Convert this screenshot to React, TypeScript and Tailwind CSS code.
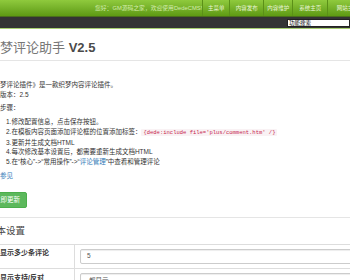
import React from "react";

const font = { fontFamily: '"Liberation Sans", "Noto Sans CJK SC", sans-serif' };

export default function App() {
  return (
    <div className="w-[350px] h-[280px] overflow-hidden bg-white relative" style={font}>
      {/* top green bar */}
      <div className="h-[16px] bg-gradient-to-b from-[#8fca3d] to-[#5e9a12] flex items-center whitespace-nowrap">
        <span className="ml-[95px] w-[117px] text-[5.8px] leading-[8px] text-[#d4ecad]">
          您好：GM源码之家，欢迎使用DedeCMS!
        </span>
        <div className="flex h-[16px] items-center">
          {[
            ["主菜单", "w-[27px]"],
            ["内容发布", "w-[34px]"],
            ["内容维护", "w-[29px]"],
            ["系统主页", "w-[35px]"],
            ["网站主页", "w-[40px]"],
          ].map(([t, w]) => (
            <div
              key={t}
              className={`${w} h-[16px] flex items-center justify-center border-l border-[#5b9018] text-[5.5px] leading-[8px] text-[#eaf6d8]`}
            >
              {t}
            </div>
          ))}
        </div>
      </div>
      {/* dark bar */}
      <div className="h-[12px] bg-[#343434] flex items-center border-t border-[#4a6e1c]">
        <div className="ml-[287px] w-[80px] h-[8px] bg-white border border-[#222] text-[5.5px] leading-[6px] px-[1px] text-black whitespace-nowrap">
          功能搜索
        </div>
      </div>
      <div className="h-[1px] bg-[#a9cf72]" />

      {/* content */}
      <div className="ml-[-13px] w-[380px] text-[#333]">
        <div className="pt-[11px] pb-[5px] border-b border-[#e5e5e5] mr-[-20px]">
          <h1 className="text-[13px] leading-[15px] text-[#777] whitespace-nowrap">
            织梦评论助手 <span className="font-semibold text-[#4a4a4a]">V2.5</span>
          </h1>
        </div>

        <div className="mt-[19px] text-[6.5px] leading-[10px] whitespace-nowrap">
          <p>《织梦评论插件》是一款织梦内容评论插件。</p>
          <p>当前版本：2.5</p>
          <p className="mt-[3px]">使用步骤：</p>
          <div className="mt-[4px] pl-[19px] leading-[9.75px]">
            <p>1.修改配置信息，点击保存按钮。</p>
            <p>
              2.在模板内容页面添加评论框的位置添加标签：
              <code
                className="px-[2px] rounded-[1px] bg-[#f9f2f4] text-[#c7254e] text-[5.5px]"
                style={{ fontFamily: '"Liberation Mono", monospace' }}
              >
                {"{dede:include file='plus/comment.htm' /}"}
              </code>
            </p>
            <p>3.更新并生成文档HTML</p>
            <p>4.每次修改基本设置后，都需要重新生成文档HTML</p>
            <p>
              5.在“核心”-&gt;“常用操作”-&gt;“<span className="text-[#337ab7]">评论管理</span>”中查看和管理评论
            </p>
          </div>
          <p className="mt-[4px] text-[#337ab7]">详情参见</p>
        </div>

        <div className="mt-[4px]">
          <div className="inline-flex items-center h-[16px] px-[6px] rounded-[2px] bg-[#5cb85c] border border-[#4cae4c] text-white text-[6.5px] leading-[8px] whitespace-nowrap">
            立即更新
          </div>
        </div>

        <div className="mt-[8px] h-[1px] bg-[#e5e5e5]" />

        <h2 className="mt-[7px] text-[9.5px] leading-[12px] text-[#444] whitespace-nowrap">基本设置</h2>

        <div className="mt-[7px] border-t border-[#ddd]">
          <div className="flex border-b border-[#ddd] h-[24px]">
            <div className="w-[88px] shrink-0 border-r border-[#ddd] pl-[13px] pt-[4px] text-[7px] leading-[8px] font-bold text-[#333] whitespace-nowrap">
              显示多少条评论
            </div>
            <div className="flex-1 pl-[5px] pt-[4px]">
              <div className="h-[15px] rounded-[2px] border border-[#ccc] shadow-[inset_0_1px_1px_rgba(0,0,0,0.075)] pl-[6px] flex items-center text-[6.5px] text-[#555]">
                5
              </div>
            </div>
          </div>
          <div className="flex h-[24px]">
            <div className="w-[88px] shrink-0 border-r border-[#ddd] pl-[13px] pt-[5px] text-[7px] leading-[8px] font-bold text-[#333] whitespace-nowrap">
              显示支持/反对
            </div>
            <div className="flex-1 pl-[5px] pt-[4px]">
              <div className="h-[16px] rounded-[2px] border border-[#ccc] shadow-[inset_0_1px_1px_rgba(0,0,0,0.075)] pl-[8px] flex items-center text-[6.5px] text-[#555]">
                都显示
              </div>
            </div>
          </div>
        </div>
      </div>
    </div>
  );
}
